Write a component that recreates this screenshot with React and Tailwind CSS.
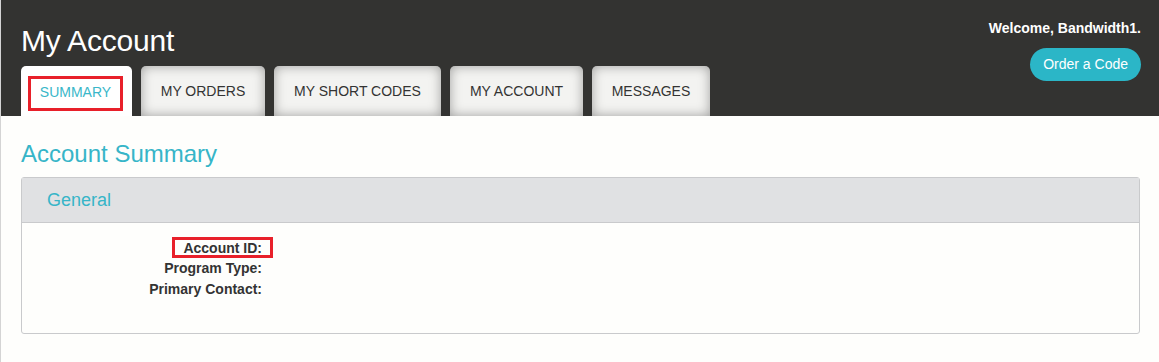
import React from 'react';

const tabs = [
  { label: 'SUMMARY', w: 'w-[111px]', active: true },
  { label: 'MY ORDERS', w: 'w-[124px]' },
  { label: 'MY SHORT CODES', w: 'w-[167px]' },
  { label: 'MY ACCOUNT', w: 'w-[133px]' },
  { label: 'MESSAGES', w: 'w-[118px]' },
];

const fields = ['Account ID:', 'Program Type:', 'Primary Contact:'];

const App = () => {
  return (
    <div className="w-[1159px] h-[362px] bg-[#fefefc] border-l border-[#d4d4d4] font-['Liberation_Sans',Arial,sans-serif] overflow-hidden">
      <div className="h-[116px] bg-[#333331] flex justify-between pl-5 pr-[18px]">
        <div className="flex flex-col">
          <h1 className="text-white text-[30px] leading-[33px] mt-[24px] tracking-[-0.2px]">My Account</h1>
          <div className="flex gap-[9px] mt-[9px]">
            {tabs.map((tab) =>
              tab.active ? (
                <div key={tab.label} className={`${tab.w} h-[50px] bg-white rounded-t-[5px] pt-[10px] pl-[7px]`}>
                  <div className="w-[95px] h-[35px] border-[3px] border-[#e8202a] flex items-center justify-center text-[14px] text-[#3ab7c9] pb-[3px]">
                    {tab.label}
                  </div>
                </div>
              ) : (
                <div
                  key={tab.label}
                  className={`${tab.w} h-[50px] bg-[#f3f3f1] rounded-t-[5px] shadow-[inset_0_0_12px_rgba(0,0,0,0.35)] flex items-center justify-center text-[14px] text-[#333]`}
                >
                  {tab.label}
                </div>
              )
            )}
          </div>
        </div>
        <div className="flex flex-col items-end">
          <p className="text-white text-[14px] leading-[16px] font-bold mt-[20px]">Welcome, Bandwidth1.</p>
          <button className="mt-[12px] h-[33px] px-[13px] bg-[#2bb6c7] rounded-full text-white text-[14px]">
            Order a Code
          </button>
        </div>
      </div>

      <div className="px-5">
        <h2 className="text-[#36b5c8] text-[24px] mt-[24px] leading-[27px]">Account Summary</h2>
        <div className="mt-[10px] w-[1119px] border border-[#c9cacc] rounded-[3px]">
          <div className="h-[45px] bg-[#e0e1e3] border-b border-[#c9cacc] flex items-center pl-[25px] text-[#36b5c8] text-[18px]">
            General
          </div>
          <div className="h-[110px] pt-[15px]">
            {fields.map((f, i) => (
              <div key={f} className="flex h-[20.5px] items-center">
                <div className="w-[240px] text-right text-[14px] font-bold text-[#333]">
                  {i === 0 ? (
                    <span className="relative">
                      {f}
                      <span className="absolute -left-[11px] -right-[11px] -top-[3px] -bottom-[2px] border-[3px] border-[#e8202a]"></span>
                    </span>
                  ) : (
                    f
                  )}
                </div>
              </div>
            ))}
          </div>
        </div>
      </div>
    </div>
  );
};

export default App;
